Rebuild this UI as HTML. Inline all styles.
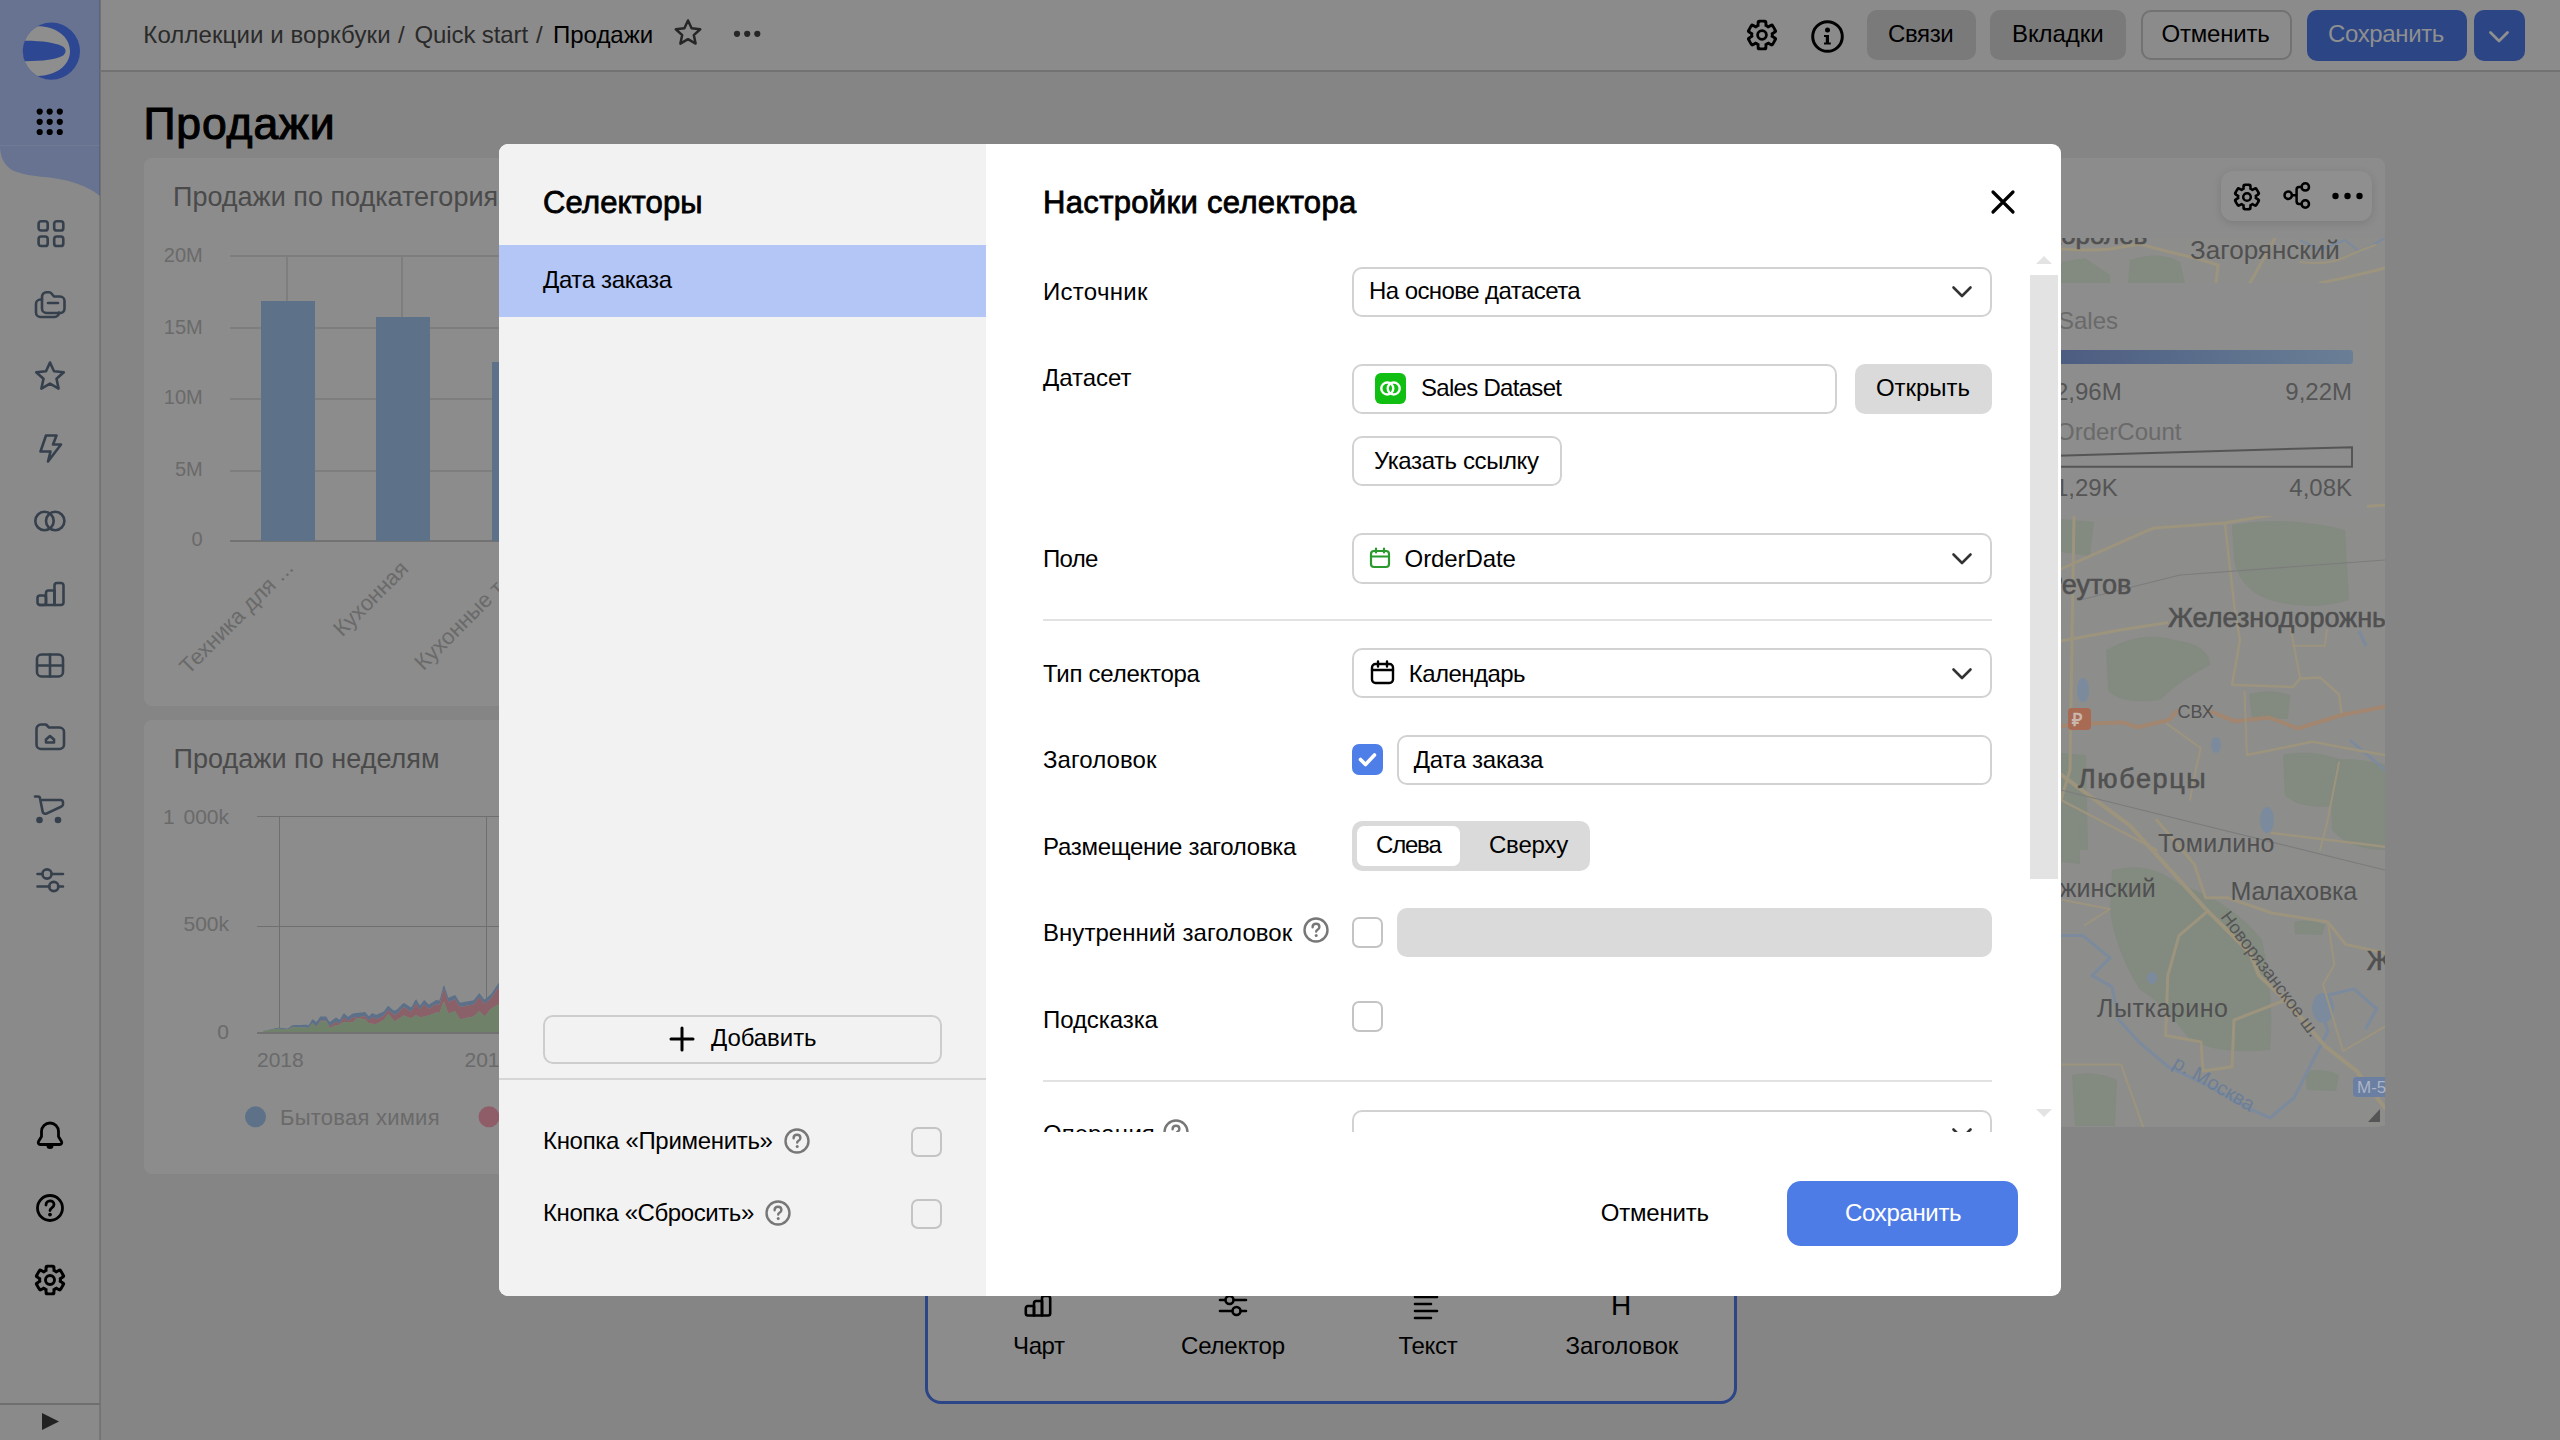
<!DOCTYPE html><html><head><meta charset="utf-8"><style>
*{box-sizing:border-box;margin:0;padding:0}
html,body{width:2560px;height:1440px;overflow:hidden}
body{position:relative;background:#858585;font-family:"Liberation Sans",sans-serif;color:#000}
.a{position:absolute}
.t{position:absolute;white-space:nowrap;line-height:1}
svg{position:absolute;overflow:visible}
</style></head><body>
<div class="a" style="left:0px;top:0px;width:100px;height:1440px;background:#8a8a8a"></div>
<svg style="left:0px;top:0px;" width="100" height="200" viewBox="0 0 100 200"><path d="M0 0H100V196C90 188 75 180 44 177C30 175.5 20 174 12 170C4 165 0 157 0 146Z" fill="#677390"/><path d="M0 145.5H100" stroke="#6f7a94" stroke-width="1"/></svg>
<div class="a" style="left:99px;top:0px;width:2px;height:1440px;background:rgba(0,0,0,0.13)"></div>
<svg style="left:21px;top:21px;" width="60" height="60" viewBox="0 0 60 60"><defs><clipPath id="lc"><circle cx="30.4" cy="30.1" r="28.6"/></clipPath></defs><circle cx="30.4" cy="30.1" r="28.6" fill="#2e4793"/><g clip-path="url(#lc)"><path d="M15 5.2C34 4.6 49 15 49 30.1C49 45 34 55.6 15 55L0 55L0 5.2Z" fill="#8e8e8e"/><path d="M0 19.8C20 19.5 35 21.5 42.5 26Q46.8 30 42.5 34.2C35 38.6 20 40.4 0 40.1Z" fill="#2e4793"/></g></svg>
<svg style="left:0px;top:0px;" width="100" height="150" viewBox="0 0 100 150"><circle cx="39.7" cy="111.6" r="3.1" fill="#000"/><circle cx="39.7" cy="121.8" r="3.1" fill="#000"/><circle cx="39.7" cy="132" r="3.1" fill="#000"/><circle cx="49.7" cy="111.6" r="3.1" fill="#000"/><circle cx="49.7" cy="121.8" r="3.1" fill="#000"/><circle cx="49.7" cy="132" r="3.1" fill="#000"/><circle cx="59.8" cy="111.6" r="3.1" fill="#000"/><circle cx="59.8" cy="121.8" r="3.1" fill="#000"/><circle cx="59.8" cy="132" r="3.1" fill="#000"/></svg>
<svg style="left:36px;top:218px;" width="32" height="32" viewBox="0 0 32 32"><g fill="none" stroke="#36404c" stroke-width="2.6" stroke-linecap="round" stroke-linejoin="round"><rect x="2.6" y="3.2" width="9.1" height="9.3" rx="2.6"/><rect x="18.2" y="3.2" width="9.1" height="9.3" rx="2.6"/><rect x="2.6" y="18.5" width="9.1" height="9.5" rx="2.6"/><rect x="18.2" y="18.5" width="9.1" height="9.5" rx="2.6"/></g></svg>
<svg style="left:34px;top:290px;" width="32" height="32" viewBox="0 0 32 32"><g fill="none" stroke="#36404c" stroke-width="2.6" stroke-linecap="round" stroke-linejoin="round"><path d="M8 9.5H6.5A4.5 4.5 0 0 0 2 14V22.5A4.5 4.5 0 0 0 6.5 27H20.5A4.5 4.5 0 0 0 25 22.5"/><path d="M8 7V18.5A4.5 4.5 0 0 0 12.5 23H26.5A4.5 4.5 0 0 0 30.5 18.5V11A4.5 4.5 0 0 0 26 6.5H20L17.5 3.5A3 3 0 0 0 15 2.3H12.5A4.5 4.5 0 0 0 8 7Z"/><path d="M14 13H24"/></g></svg>
<svg style="left:34px;top:360px;" width="32" height="32" viewBox="0 0 32 32"><path fill="none" stroke="#36404c" stroke-width="2.6" stroke-linecap="round" stroke-linejoin="round" d="M16 2.5L20 11.2L29.8 12.3L22.5 18.8L24.6 28.6L16 23.6L7.4 28.6L9.5 18.8L2.2 12.3L12 11.2Z"/></svg>
<svg style="left:35px;top:433px;" width="32" height="32" viewBox="0 0 32 32"><path fill="none" stroke="#36404c" stroke-width="2.6" stroke-linecap="round" stroke-linejoin="round" d="M11 2.5H21.5L18 11.5H26L13 28.5L15.5 18.5H5.5Z"/></svg>
<svg style="left:34px;top:505px;" width="32" height="32" viewBox="0 0 32 32"><g fill="none" stroke="#36404c" stroke-width="2.6" stroke-linecap="round" stroke-linejoin="round"><circle cx="10.5" cy="16" r="9.2"/><circle cx="21.2" cy="16" r="9.2"/></g></svg>
<svg style="left:35px;top:579px;" width="32" height="32" viewBox="0 0 32 32"><g fill="none" stroke="#36404c" stroke-width="2.6" stroke-linecap="round" stroke-linejoin="round"><rect x="2.5" y="16.5" width="8.5" height="9.5" rx="2.5"/><path d="M11 26V14A2.5 2.5 0 0 1 13.5 11.5H19.5V26"/><path d="M19.5 26V6.5A2.5 2.5 0 0 1 22 4H26A2.5 2.5 0 0 1 28.5 6.5V23.5A2.5 2.5 0 0 1 26 26H4.5"/></g></svg>
<svg style="left:34px;top:649px;" width="32" height="32" viewBox="0 0 32 32"><g fill="none" stroke="#36404c" stroke-width="2.6" stroke-linecap="round" stroke-linejoin="round"><rect x="3" y="5.5" width="26" height="22" rx="4.5"/><path d="M3 16.5H29M16 5.5V27.5"/></g></svg>
<svg style="left:34px;top:721px;" width="32" height="32" viewBox="0 0 32 32"><g fill="none" stroke="#36404c" stroke-width="2.6" stroke-linecap="round" stroke-linejoin="round"><path d="M2.5 8A4.5 4.5 0 0 1 7 3.5H12L15 6.5H25.5A4.5 4.5 0 0 1 30 11V23.5A4.5 4.5 0 0 1 25.5 28H7A4.5 4.5 0 0 1 2.5 23.5Z"/><path d="M12 21.5V18.5L16 15L20 18.5V21.5Z"/></g></svg>
<svg style="left:33px;top:794px;" width="32" height="32" viewBox="0 0 32 32"><g fill="none" stroke="#36404c" stroke-width="2.6" stroke-linecap="round" stroke-linejoin="round"><path d="M2 2.5H5A2 2 0 0 1 7 4.2L9.6 17.5A2.8 2.8 0 0 0 13.4 19.6L28.5 12.5A2.5 2.5 0 0 0 30 10.2V8.5A2.5 2.5 0 0 0 27.5 6H7.5"/></g><circle cx="6.5" cy="26" r="3.3" fill="#36404c"/><circle cx="25" cy="26" r="3.3" fill="#36404c"/></svg>
<svg style="left:34px;top:866px;" width="32" height="32" viewBox="0 0 32 32"><g fill="none" stroke="#36404c" stroke-width="2.6" stroke-linecap="round" stroke-linejoin="round"><path d="M3.5 8H8.5M17.5 8H29M3.5 20.5H15.5M24 20.5H29"/><circle cx="13" cy="8" r="4.6"/><circle cx="19.8" cy="20.5" r="4.6"/></g></svg>
<svg style="left:34px;top:1120px;" width="32" height="32" viewBox="0 0 32 32"><path fill="none" stroke="#000" stroke-width="2.8" stroke-linecap="round" stroke-linejoin="round" d="M16 3A8.5 8.5 0 0 0 7.5 11.5V16.5L4.5 21.5A2 2 0 0 0 6.2 24.5H25.8A2 2 0 0 0 27.5 21.5L24.5 16.5V11.5A8.5 8.5 0 0 0 16 3Z"/><path d="M12.5 25.5A3.5 3.5 0 0 0 19.5 25.5Z" fill="#000"/></svg>
<svg style="left:34px;top:1192px;" width="32" height="32" viewBox="0 0 32 32"><circle fill="none" stroke="#000" stroke-width="2.8" stroke-linecap="round" stroke-linejoin="round" cx="16" cy="16" r="12.5"/><path fill="none" stroke="#000" stroke-width="2.8" stroke-linecap="round" stroke-linejoin="round" d="M12 13C12 10.5 13.8 8.8 16 8.8S20 10.3 20 12.6C20 14.6 18.6 15.4 17.6 16.1C16.6 16.8 16 17.4 16 18.6"/><circle cx="16" cy="22.6" r="1.9" fill="#000"/></svg>
<svg style="left:34px;top:1264px;" width="32" height="32" viewBox="0 0 32 32"><defs><mask id="gm1"><rect x="-5" y="-5" width="42" height="42" fill="#fff"/><circle cx="16.0" cy="16.0" r="8.95" fill="#000"/><rect x="13.50" y="3.55" width="5.00" height="12.45" rx="1.2" fill="#000" transform="rotate(0 16.0 16.0)"/><rect x="13.50" y="3.55" width="5.00" height="12.45" rx="1.2" fill="#000" transform="rotate(60 16.0 16.0)"/><rect x="13.50" y="3.55" width="5.00" height="12.45" rx="1.2" fill="#000" transform="rotate(120 16.0 16.0)"/><rect x="13.50" y="3.55" width="5.00" height="12.45" rx="1.2" fill="#000" transform="rotate(180 16.0 16.0)"/><rect x="13.50" y="3.55" width="5.00" height="12.45" rx="1.2" fill="#000" transform="rotate(240 16.0 16.0)"/><rect x="13.50" y="3.55" width="5.00" height="12.45" rx="1.2" fill="#000" transform="rotate(300 16.0 16.0)"/></mask></defs><g mask="url(#gm1)"><circle cx="16.0" cy="16.0" r="11.85" fill="#000"/><rect x="10.60" y="0.65" width="10.80" height="15.35" rx="2.6" fill="#000" transform="rotate(0 16.0 16.0)"/><rect x="10.60" y="0.65" width="10.80" height="15.35" rx="2.6" fill="#000" transform="rotate(60 16.0 16.0)"/><rect x="10.60" y="0.65" width="10.80" height="15.35" rx="2.6" fill="#000" transform="rotate(120 16.0 16.0)"/><rect x="10.60" y="0.65" width="10.80" height="15.35" rx="2.6" fill="#000" transform="rotate(180 16.0 16.0)"/><rect x="10.60" y="0.65" width="10.80" height="15.35" rx="2.6" fill="#000" transform="rotate(240 16.0 16.0)"/><rect x="10.60" y="0.65" width="10.80" height="15.35" rx="2.6" fill="#000" transform="rotate(300 16.0 16.0)"/></g><circle cx="16.0" cy="16.0" r="4.5" fill="none" stroke="#000" stroke-width="2.9"/></svg>
<div class="a" style="left:0px;top:1403px;width:100px;height:2px;background:#6f6f6f"></div>
<svg style="left:40px;top:1412px;" width="20" height="20" viewBox="0 0 20 20"><path d="M2 1L19 9.5L2 18Z" fill="#222"/></svg>
<div class="a" style="left:101px;top:0px;width:2459px;height:71px;background:#8b8b8b"></div>
<div class="a" style="left:101px;top:70px;width:2459px;height:2px;background:#727272"></div>
<div class="t" style="left:143.3px;top:22.5px;font-size:24px;font-weight:400;color:#2a2a2a;;letter-spacing:0.103px">Коллекции и воркбуки</div>
<div class="t" style="left:398px;top:22.5px;font-size:24px;font-weight:400;color:#2a2a2a;">/</div>
<div class="t" style="left:414.5px;top:22.5px;font-size:24px;font-weight:400;color:#2a2a2a;;letter-spacing:-0.114px">Quick start</div>
<div class="t" style="left:536px;top:22.5px;font-size:24px;font-weight:400;color:#2a2a2a;">/</div>
<div class="t" style="left:553px;top:22.5px;font-size:24px;font-weight:400;color:#000;;letter-spacing:-0.012px">Продажи</div>
<svg style="left:672px;top:17px;" width="32" height="32" viewBox="0 0 32 32"><path d="M16 3.5L19.6 11.3L28.2 12.3L21.8 18.1L23.6 26.6L16 22.2L8.4 26.6L10.2 18.1L3.8 12.3L12.4 11.3Z" fill="none" stroke="#262626" stroke-width="2.5" stroke-linejoin="round"/></svg>
<svg style="left:730px;top:27px;" width="34" height="14" viewBox="0 0 34 14"><circle cx="7" cy="6.8" r="3.1" fill="#262626"/><circle cx="17.2" cy="6.8" r="3.1" fill="#262626"/><circle cx="27.3" cy="6.8" r="3.1" fill="#262626"/></svg>
<svg style="left:1745.6px;top:19.4px;" width="32" height="32" viewBox="0 0 32 32"><defs><mask id="gm2"><rect x="-5" y="-5" width="42" height="42" fill="#fff"/><circle cx="16.0" cy="16.0" r="8.90" fill="#000"/><rect x="13.50" y="3.50" width="5.00" height="12.50" rx="1.2" fill="#000" transform="rotate(0 16.0 16.0)"/><rect x="13.50" y="3.50" width="5.00" height="12.50" rx="1.2" fill="#000" transform="rotate(60 16.0 16.0)"/><rect x="13.50" y="3.50" width="5.00" height="12.50" rx="1.2" fill="#000" transform="rotate(120 16.0 16.0)"/><rect x="13.50" y="3.50" width="5.00" height="12.50" rx="1.2" fill="#000" transform="rotate(180 16.0 16.0)"/><rect x="13.50" y="3.50" width="5.00" height="12.50" rx="1.2" fill="#000" transform="rotate(240 16.0 16.0)"/><rect x="13.50" y="3.50" width="5.00" height="12.50" rx="1.2" fill="#000" transform="rotate(300 16.0 16.0)"/></mask></defs><g mask="url(#gm2)"><circle cx="16.0" cy="16.0" r="11.70" fill="#000"/><rect x="10.70" y="0.70" width="10.60" height="15.30" rx="2.6" fill="#000" transform="rotate(0 16.0 16.0)"/><rect x="10.70" y="0.70" width="10.60" height="15.30" rx="2.6" fill="#000" transform="rotate(60 16.0 16.0)"/><rect x="10.70" y="0.70" width="10.60" height="15.30" rx="2.6" fill="#000" transform="rotate(120 16.0 16.0)"/><rect x="10.70" y="0.70" width="10.60" height="15.30" rx="2.6" fill="#000" transform="rotate(180 16.0 16.0)"/><rect x="10.70" y="0.70" width="10.60" height="15.30" rx="2.6" fill="#000" transform="rotate(240 16.0 16.0)"/><rect x="10.70" y="0.70" width="10.60" height="15.30" rx="2.6" fill="#000" transform="rotate(300 16.0 16.0)"/></g><circle cx="16.0" cy="16.0" r="4.4" fill="none" stroke="#000" stroke-width="2.8"/></svg>
<svg style="left:1811px;top:19.5px;" width="33" height="33" viewBox="0 0 33 33"><circle cx="16.5" cy="16.5" r="14.8" fill="none" stroke="#000" stroke-width="3"/><circle cx="16.5" cy="10" r="2.5" fill="#000"/><path d="M13 15H18V22.5H19.8V24.5H13V22.5H14.8V17H13Z" fill="#000"/></svg>
<div class="a" style="left:1867px;top:10px;width:109px;height:50px;background:#7a7a7a;border-radius:10px"></div>
<div class="t" style="left:1888px;top:21.6px;font-size:24px;font-weight:400;color:#000;;letter-spacing:-0.365px">Связи</div>
<div class="a" style="left:1990px;top:10px;width:136px;height:50px;background:#7a7a7a;border-radius:10px"></div>
<div class="t" style="left:2012px;top:21.6px;font-size:24px;font-weight:400;color:#000;;letter-spacing:-0.081px">Вкладки</div>
<div class="a" style="left:2141px;top:10px;width:151px;height:50px;border:2px solid #727272;border-radius:10px"></div>
<div class="t" style="left:2161.5px;top:21.6px;font-size:24px;font-weight:400;color:#000;;letter-spacing:-0.187px">Отменить</div>
<div class="a" style="left:2307px;top:9.5px;width:160px;height:51px;background:#2b4585;border-radius:10px"></div>
<div class="t" style="left:2328px;top:21.6px;font-size:24px;font-weight:400;color:#8f8f8f;;letter-spacing:-0.363px">Сохранить</div>
<div class="a" style="left:2473.5px;top:9.5px;width:51.5px;height:51px;background:#2b4585;border-radius:10px"></div>
<svg style="left:2489px;top:30.5px;" width="20" height="12" viewBox="0 0 20 12"><path d="M1.5 1.5L10 10L18.5 1.5" fill="none" stroke="#8f8f8f" stroke-width="2.8" stroke-linecap="round" stroke-linejoin="round"/></svg>
<div class="t" style="left:143.5px;top:101.5px;font-size:44.5px;font-weight:400;color:#000;-webkit-text-stroke:1.1px #000;letter-spacing:0.870px">Продажи</div>
<div class="a" style="left:144px;top:158px;width:900px;height:548px;background:#8c8c8c;border-radius:8px"></div>
<div class="t" style="left:173px;top:183.5px;font-size:27px;font-weight:400;color:#4a4a4a;">Продажи по подкатегориям</div>
<div class="t" style="left:100px;width:102.7px;text-align:right;top:245.1px;font-size:20px;line-height:21px;color:#6a6a6a">20M</div>
<div class="t" style="left:100px;width:102.7px;text-align:right;top:316.8px;font-size:20px;line-height:21px;color:#6a6a6a">15M</div>
<div class="t" style="left:100px;width:102.7px;text-align:right;top:387.2px;font-size:20px;line-height:21px;color:#6a6a6a">10M</div>
<div class="t" style="left:100px;width:102.7px;text-align:right;top:458.9px;font-size:20px;line-height:21px;color:#6a6a6a">5M</div>
<div class="t" style="left:100px;width:102.7px;text-align:right;top:529.0px;font-size:20px;line-height:21px;color:#6a6a6a">0</div>
<div class="a" style="left:230px;top:255px;width:800px;height:2px;background:#7e7e7e"></div>
<div class="a" style="left:230px;top:327px;width:800px;height:2px;background:#7e7e7e"></div>
<div class="a" style="left:230px;top:398px;width:800px;height:2px;background:#7e7e7e"></div>
<div class="a" style="left:230px;top:470px;width:800px;height:2px;background:#7e7e7e"></div>
<div class="a" style="left:230px;top:540px;width:800px;height:2px;background:#727272"></div>
<div class="a" style="left:286px;top:256px;width:2px;height:45px;background:#7e7e7e"></div>
<div class="a" style="left:401px;top:256px;width:2px;height:61px;background:#7e7e7e"></div>
<div class="a" style="left:516px;top:256px;width:2px;height:106px;background:#7e7e7e"></div>
<div class="a" style="left:261px;top:301px;width:54px;height:240px;background:#5d7189"></div>
<div class="a" style="left:376px;top:317px;width:54px;height:224px;background:#5d7189"></div>
<div class="a" style="left:492px;top:362px;width:54px;height:179px;background:#5d7189"></div>
<div class="t" style="left:-105.0px;top:551.4px;width:400px;text-align:right;font-size:22px;color:#6a6a6a;transform-origin:400px 18.6px;transform:rotate(-45deg)">Техника для ...</div>
<div class="t" style="left:10.0px;top:552.4px;width:400px;text-align:right;font-size:22px;color:#6a6a6a;transform-origin:400px 18.6px;transform:rotate(-45deg)">Кухонная</div>
<div class="t" style="left:127.0px;top:550.4px;width:400px;text-align:right;font-size:22px;color:#6a6a6a;transform-origin:400px 18.6px;transform:rotate(-45deg)">Кухонные то...</div>
<div class="a" style="left:144px;top:720px;width:900px;height:454px;background:#8c8c8c;border-radius:8px"></div>
<div class="t" style="left:173.6px;top:745.8px;font-size:27px;font-weight:400;color:#4a4a4a;;letter-spacing:0.025px">Продажи по неделям</div>
<div class="t" style="left:100px;width:129px;text-align:right;top:805.8px;font-size:21px;line-height:21px;color:#6a6a6a;word-spacing:3px">1 000k</div>
<div class="t" style="left:100px;width:129px;text-align:right;top:913.4px;font-size:21px;line-height:21px;color:#6a6a6a;word-spacing:3px">500k</div>
<div class="t" style="left:100px;width:129px;text-align:right;top:1021.0px;font-size:21px;line-height:21px;color:#6a6a6a;word-spacing:3px">0</div>
<div class="a" style="left:257px;top:816px;width:800px;height:1px;background:#6f6f6f"></div>
<div class="a" style="left:257px;top:926px;width:800px;height:1px;background:#6f6f6f"></div>
<div class="a" style="left:279px;top:817px;width:1px;height:215px;background:#6f6f6f"></div>
<div class="a" style="left:486px;top:817px;width:1px;height:215px;background:#6f6f6f"></div>
<div class="a" style="left:257px;top:1032px;width:800px;height:2px;background:#727272"></div>
<div class="t" style="left:257px;top:1048.7px;font-size:21px;line-height:21px;color:#6a6a6a">2018</div>
<div class="t" style="left:464.5px;top:1048.7px;font-size:21px;line-height:21px;color:#6a6a6a">2019</div>
<div class="a" style="left:0;top:0;width:499px;height:1100px;overflow:hidden"><svg style="left:0px;top:0px;" width="600" height="1100" viewBox="0 0 600 1100"><path d="M263.2 1032 L263.2 1031.1 L264.2 1030.8 L265.2 1030.6 L266.2 1030.4 L267.2 1030.1 L268.2 1029.9 L269.2 1029.7 L270.2 1029.5 L271.2 1029.2 L272.2 1029.0 L273.2 1028.8 L274.2 1028.6 L275.2 1028.3 L276.2 1028.1 L277.2 1027.9 L278.2 1027.7 L279.2 1027.7 L280.2 1027.8 L281.2 1027.9 L282.2 1028.0 L283.2 1028.1 L284.2 1028.2 L285.2 1028.3 L286.2 1028.4 L287.2 1028.5 L288.2 1028.5 L289.2 1027.6 L290.2 1026.8 L291.2 1025.9 L292.2 1025.2 L293.2 1025.2 L294.2 1025.1 L295.2 1025.1 L296.2 1025.1 L297.2 1025.0 L298.2 1025.0 L299.2 1025.0 L300.2 1024.9 L301.2 1024.9 L302.2 1024.9 L303.2 1024.8 L304.2 1024.8 L305.2 1024.8 L306.2 1024.7 L307.2 1025.0 L308.2 1025.5 L309.2 1024.6 L310.2 1022.9 L311.2 1021.1 L312.2 1019.4 L313.2 1019.5 L314.2 1020.3 L315.2 1021.2 L316.2 1022.1 L317.2 1021.1 L318.2 1019.6 L319.2 1018.1 L320.2 1016.6 L321.2 1016.4 L322.2 1016.4 L323.2 1016.4 L324.2 1016.4 L325.2 1016.4 L326.2 1016.5 L327.2 1018.2 L328.2 1019.9 L329.2 1021.6 L330.2 1021.8 L331.2 1021.0 L332.2 1020.3 L333.2 1019.5 L334.2 1018.7 L335.2 1018.0 L336.2 1017.5 L337.2 1018.2 L338.2 1018.8 L339.2 1019.4 L340.2 1019.2 L341.2 1017.5 L342.2 1015.7 L343.2 1014.0 L344.2 1013.4 L345.2 1014.3 L346.2 1015.2 L347.2 1016.1 L348.2 1016.9 L349.2 1016.1 L350.2 1015.3 L351.2 1014.5 L352.2 1013.7 L353.2 1013.4 L354.2 1013.3 L355.2 1013.2 L356.2 1013.1 L357.2 1012.9 L358.2 1012.8 L359.2 1012.7 L360.2 1012.6 L361.2 1012.5 L362.2 1012.4 L363.2 1012.2 L364.2 1012.1 L365.2 1012.0 L366.2 1013.3 L367.2 1014.5 L368.2 1015.8 L369.2 1015.9 L370.2 1014.9 L371.2 1013.9 L372.2 1013.1 L373.2 1013.6 L374.2 1014.1 L375.2 1014.6 L376.2 1014.8 L377.2 1014.4 L378.2 1014.0 L379.2 1013.5 L380.2 1013.1 L381.2 1012.7 L382.2 1012.2 L383.2 1011.8 L384.2 1011.0 L385.2 1009.6 L386.2 1008.3 L387.2 1007.0 L388.2 1005.7 L389.2 1006.6 L390.2 1007.5 L391.2 1008.4 L392.2 1009.3 L393.2 1010.2 L394.2 1010.4 L395.2 1010.3 L396.2 1010.1 L397.2 1009.3 L398.2 1008.3 L399.2 1007.3 L400.2 1006.3 L401.2 1005.3 L402.2 1004.3 L403.2 1003.3 L404.2 1003.0 L405.2 1003.7 L406.2 1004.3 L407.2 1005.0 L408.2 1005.7 L409.2 1006.3 L410.2 1007.0 L411.2 1007.5 L412.2 1005.7 L413.2 1003.9 L414.2 1002.1 L415.2 1000.3 L416.2 999.2 L417.2 1000.9 L418.2 1002.7 L419.2 1004.4 L420.2 1005.3 L421.2 1004.0 L422.2 1002.6 L423.2 1001.3 L424.2 1000.0 L425.2 1000.8 L426.2 1001.9 L427.2 1003.0 L428.2 1004.1 L429.2 1004.4 L430.2 1003.8 L431.2 1003.1 L432.2 1002.5 L433.2 1001.9 L434.2 1001.3 L435.2 1000.6 L436.2 1000.0 L437.2 1000.0 L438.2 1000.4 L439.2 1000.7 L440.2 998.0 L441.2 994.2 L442.2 990.4 L443.2 986.6 L444.2 985.3 L445.2 988.4 L446.2 991.5 L447.2 994.6 L448.2 997.7 L449.2 997.4 L450.2 997.0 L451.2 996.6 L452.2 996.2 L453.2 995.7 L454.2 995.3 L455.2 995.1 L456.2 996.7 L457.2 998.3 L458.2 999.9 L459.2 1001.5 L460.2 1002.7 L461.2 1002.5 L462.2 1002.3 L463.2 1002.2 L464.2 1002.0 L465.2 1001.8 L466.2 1001.6 L467.2 1001.4 L468.2 1001.3 L469.2 1001.1 L470.2 1000.9 L471.2 1000.7 L472.2 1000.5 L473.2 1000.4 L474.2 999.6 L475.2 998.3 L476.2 997.1 L477.2 995.8 L478.2 994.6 L479.2 993.3 L480.2 994.0 L481.2 995.4 L482.2 996.8 L483.2 998.2 L484.2 999.6 L485.2 999.1 L486.2 998.2 L487.2 997.4 L488.2 996.5 L489.2 995.7 L490.2 994.8 L491.2 994.0 L492.2 992.5 L493.2 991.0 L494.2 989.6 L495.2 988.1 L496.2 986.6 L497.2 985.2 L498.2 983.7 L499.2 982.7 L500.2 982.0 L500.2 986.2 L499.2 986.9 L498.2 987.9 L497.2 989.4 L496.2 990.8 L495.2 992.3 L494.2 993.8 L493.2 995.2 L492.2 996.7 L491.2 998.2 L490.2 999.0 L489.2 999.9 L488.2 1000.7 L487.2 1001.6 L486.2 1002.4 L485.2 1003.3 L484.2 1003.8 L483.2 1002.4 L482.2 1001.0 L481.2 999.6 L480.2 998.2 L479.2 997.5 L478.2 998.8 L477.2 1000.0 L476.2 1001.3 L475.2 1002.5 L474.2 1003.8 L473.2 1004.6 L472.2 1004.7 L471.2 1004.9 L470.2 1005.1 L469.2 1005.3 L468.2 1005.5 L467.2 1005.6 L466.2 1005.8 L465.2 1006.0 L464.2 1006.2 L463.2 1006.4 L462.2 1006.5 L461.2 1006.7 L460.2 1006.9 L459.2 1005.7 L458.2 1004.1 L457.2 1002.5 L456.2 1000.9 L455.2 999.3 L454.2 999.5 L453.2 999.9 L452.2 1000.4 L451.2 1000.8 L450.2 1001.2 L449.2 1001.6 L448.2 1001.9 L447.2 998.8 L446.2 995.7 L445.2 992.6 L444.2 989.5 L443.2 990.8 L442.2 994.6 L441.2 998.4 L440.2 1002.2 L439.2 1004.9 L438.2 1004.6 L437.2 1004.2 L436.2 1004.2 L435.2 1004.8 L434.2 1005.5 L433.2 1006.1 L432.2 1006.7 L431.2 1007.3 L430.2 1008.0 L429.2 1008.6 L428.2 1008.3 L427.2 1007.2 L426.2 1006.1 L425.2 1005.0 L424.2 1004.2 L423.2 1005.5 L422.2 1006.8 L421.2 1008.2 L420.2 1009.5 L419.2 1008.6 L418.2 1006.9 L417.2 1005.1 L416.2 1003.4 L415.2 1004.5 L414.2 1006.3 L413.2 1008.1 L412.2 1009.9 L411.2 1011.7 L410.2 1011.2 L409.2 1010.5 L408.2 1009.9 L407.2 1009.2 L406.2 1008.5 L405.2 1007.9 L404.2 1007.2 L403.2 1007.5 L402.2 1008.5 L401.2 1009.5 L400.2 1010.5 L399.2 1011.5 L398.2 1012.5 L397.2 1013.5 L396.2 1014.3 L395.2 1014.5 L394.2 1014.6 L393.2 1014.4 L392.2 1013.5 L391.2 1012.6 L390.2 1011.7 L389.2 1010.8 L388.2 1009.9 L387.2 1011.2 L386.2 1012.5 L385.2 1013.8 L384.2 1015.2 L383.2 1016.0 L382.2 1016.4 L381.2 1016.9 L380.2 1017.3 L379.2 1017.7 L378.2 1018.2 L377.2 1018.6 L376.2 1019.0 L375.2 1018.8 L374.2 1018.3 L373.2 1017.8 L372.2 1017.3 L371.2 1018.1 L370.2 1019.1 L369.2 1020.1 L368.2 1020.0 L367.2 1018.7 L366.2 1017.5 L365.2 1016.2 L364.2 1016.3 L363.2 1016.4 L362.2 1016.6 L361.2 1016.7 L360.2 1016.8 L359.2 1016.9 L358.2 1017.0 L357.2 1017.1 L356.2 1017.3 L355.2 1017.4 L354.2 1017.5 L353.2 1017.6 L352.2 1017.9 L351.2 1018.7 L350.2 1019.5 L349.2 1020.3 L348.2 1021.1 L347.2 1020.3 L346.2 1019.4 L345.2 1018.5 L344.2 1017.6 L343.2 1018.2 L342.2 1019.9 L341.2 1021.7 L340.2 1023.4 L339.2 1023.6 L338.2 1023.0 L337.2 1022.4 L336.2 1021.7 L335.2 1022.2 L334.2 1022.9 L333.2 1023.7 L332.2 1024.5 L331.2 1025.2 L330.2 1026.0 L329.2 1025.8 L328.2 1024.1 L327.2 1022.4 L326.2 1020.7 L325.2 1020.6 L324.2 1020.6 L323.2 1020.6 L322.2 1020.6 L321.2 1020.6 L320.2 1020.8 L319.2 1022.3 L318.2 1023.8 L317.2 1025.3 L316.2 1026.3 L315.2 1025.4 L314.2 1024.5 L313.2 1023.5 L312.2 1023.2 L311.2 1024.5 L310.2 1025.9 L309.2 1027.3 L308.2 1028.0 L307.2 1027.8 L306.2 1027.6 L305.2 1027.6 L304.2 1027.6 L303.2 1027.5 L302.2 1027.5 L301.2 1027.5 L300.2 1027.4 L299.2 1027.4 L298.2 1027.4 L297.2 1027.3 L296.2 1027.3 L295.2 1027.3 L294.2 1027.2 L293.2 1027.2 L292.2 1027.2 L291.2 1027.6 L290.2 1028.3 L289.2 1028.9 L288.2 1029.5 L287.2 1029.5 L286.2 1029.4 L285.2 1029.3 L284.2 1029.2 L283.2 1029.1 L282.2 1029.0 L281.2 1028.9 L280.2 1028.8 L279.2 1028.7 L278.2 1028.6 L277.2 1028.8 L276.2 1029.0 L275.2 1029.1 L274.2 1029.3 L273.2 1029.4 L272.2 1029.6 L271.2 1029.8 L270.2 1029.9 L269.2 1030.1 L268.2 1030.2 L267.2 1030.4 L266.2 1030.6 L265.2 1030.7 L264.2 1030.9 L263.2 1031.1 Z" fill="#5c7189"/><path d="M263.2 1032 L263.2 1031.1 L264.2 1030.9 L265.2 1030.7 L266.2 1030.6 L267.2 1030.4 L268.2 1030.2 L269.2 1030.1 L270.2 1029.9 L271.2 1029.8 L272.2 1029.6 L273.2 1029.4 L274.2 1029.3 L275.2 1029.1 L276.2 1029.0 L277.2 1028.8 L278.2 1028.6 L279.2 1028.7 L280.2 1028.8 L281.2 1028.9 L282.2 1029.0 L283.2 1029.1 L284.2 1029.2 L285.2 1029.3 L286.2 1029.4 L287.2 1029.5 L288.2 1029.5 L289.2 1028.9 L290.2 1028.3 L291.2 1027.6 L292.2 1027.2 L293.2 1027.2 L294.2 1027.2 L295.2 1027.3 L296.2 1027.3 L297.2 1027.3 L298.2 1027.4 L299.2 1027.4 L300.2 1027.4 L301.2 1027.5 L302.2 1027.5 L303.2 1027.5 L304.2 1027.6 L305.2 1027.6 L306.2 1027.6 L307.2 1027.8 L308.2 1028.0 L309.2 1027.3 L310.2 1025.9 L311.2 1024.5 L312.2 1023.2 L313.2 1023.5 L314.2 1024.5 L315.2 1025.4 L316.2 1026.3 L317.2 1025.3 L318.2 1023.8 L319.2 1022.3 L320.2 1020.8 L321.2 1020.6 L322.2 1020.6 L323.2 1020.6 L324.2 1020.6 L325.2 1020.6 L326.2 1020.7 L327.2 1022.4 L328.2 1024.1 L329.2 1025.8 L330.2 1026.0 L331.2 1025.2 L332.2 1024.5 L333.2 1023.7 L334.2 1022.9 L335.2 1022.2 L336.2 1021.7 L337.2 1022.4 L338.2 1023.0 L339.2 1023.6 L340.2 1023.4 L341.2 1021.7 L342.2 1019.9 L343.2 1018.2 L344.2 1017.6 L345.2 1018.5 L346.2 1019.4 L347.2 1020.3 L348.2 1021.1 L349.2 1020.3 L350.2 1019.5 L351.2 1018.7 L352.2 1017.9 L353.2 1017.6 L354.2 1017.5 L355.2 1017.4 L356.2 1017.3 L357.2 1017.1 L358.2 1017.0 L359.2 1016.9 L360.2 1016.8 L361.2 1016.7 L362.2 1016.6 L363.2 1016.4 L364.2 1016.3 L365.2 1016.2 L366.2 1017.5 L367.2 1018.7 L368.2 1020.0 L369.2 1020.1 L370.2 1019.1 L371.2 1018.1 L372.2 1017.3 L373.2 1017.8 L374.2 1018.3 L375.2 1018.8 L376.2 1019.0 L377.2 1018.6 L378.2 1018.2 L379.2 1017.7 L380.2 1017.3 L381.2 1016.9 L382.2 1016.4 L383.2 1016.0 L384.2 1015.2 L385.2 1013.8 L386.2 1012.5 L387.2 1011.2 L388.2 1009.9 L389.2 1010.8 L390.2 1011.7 L391.2 1012.6 L392.2 1013.5 L393.2 1014.4 L394.2 1014.6 L395.2 1014.5 L396.2 1014.3 L397.2 1013.5 L398.2 1012.5 L399.2 1011.5 L400.2 1010.5 L401.2 1009.5 L402.2 1008.5 L403.2 1007.5 L404.2 1007.2 L405.2 1007.9 L406.2 1008.5 L407.2 1009.2 L408.2 1009.9 L409.2 1010.5 L410.2 1011.2 L411.2 1011.7 L412.2 1009.9 L413.2 1008.1 L414.2 1006.3 L415.2 1004.5 L416.2 1003.4 L417.2 1005.1 L418.2 1006.9 L419.2 1008.6 L420.2 1009.5 L421.2 1008.2 L422.2 1006.8 L423.2 1005.5 L424.2 1004.2 L425.2 1005.0 L426.2 1006.1 L427.2 1007.2 L428.2 1008.3 L429.2 1008.6 L430.2 1008.0 L431.2 1007.3 L432.2 1006.7 L433.2 1006.1 L434.2 1005.5 L435.2 1004.8 L436.2 1004.2 L437.2 1004.2 L438.2 1004.6 L439.2 1004.9 L440.2 1002.2 L441.2 998.4 L442.2 994.6 L443.2 990.8 L444.2 989.5 L445.2 992.6 L446.2 995.7 L447.2 998.8 L448.2 1001.9 L449.2 1001.6 L450.2 1001.2 L451.2 1000.8 L452.2 1000.4 L453.2 999.9 L454.2 999.5 L455.2 999.3 L456.2 1000.9 L457.2 1002.5 L458.2 1004.1 L459.2 1005.7 L460.2 1006.9 L461.2 1006.7 L462.2 1006.5 L463.2 1006.4 L464.2 1006.2 L465.2 1006.0 L466.2 1005.8 L467.2 1005.6 L468.2 1005.5 L469.2 1005.3 L470.2 1005.1 L471.2 1004.9 L472.2 1004.7 L473.2 1004.6 L474.2 1003.8 L475.2 1002.5 L476.2 1001.3 L477.2 1000.0 L478.2 998.8 L479.2 997.5 L480.2 998.2 L481.2 999.6 L482.2 1001.0 L483.2 1002.4 L484.2 1003.8 L485.2 1003.3 L486.2 1002.4 L487.2 1001.6 L488.2 1000.7 L489.2 999.9 L490.2 999.0 L491.2 998.2 L492.2 996.7 L493.2 995.2 L494.2 993.8 L495.2 992.3 L496.2 990.8 L497.2 989.4 L498.2 987.9 L499.2 986.9 L500.2 986.2 L500.2 1003.1 L499.2 1003.8 L498.2 1004.4 L497.2 1005.0 L496.2 1005.6 L495.2 1006.2 L494.2 1006.8 L493.2 1007.4 L492.2 1008.0 L491.2 1008.6 L490.2 1009.7 L489.2 1010.9 L488.2 1012.0 L487.2 1013.2 L486.2 1014.3 L485.2 1015.5 L484.2 1016.2 L483.2 1015.1 L482.2 1014.0 L481.2 1012.9 L480.2 1011.8 L479.2 1011.3 L478.2 1012.2 L477.2 1013.1 L476.2 1014.1 L475.2 1015.0 L474.2 1015.9 L473.2 1016.5 L472.2 1016.7 L471.2 1016.9 L470.2 1017.1 L469.2 1017.4 L468.2 1017.6 L467.2 1017.8 L466.2 1018.0 L465.2 1018.2 L464.2 1018.4 L463.2 1018.6 L462.2 1018.9 L461.2 1019.1 L460.2 1019.3 L459.2 1018.0 L458.2 1016.3 L457.2 1014.6 L456.2 1012.9 L455.2 1011.2 L454.2 1011.3 L453.2 1011.7 L452.2 1012.1 L451.2 1012.4 L450.2 1012.8 L449.2 1013.1 L448.2 1013.4 L447.2 1010.5 L446.2 1007.6 L445.2 1004.7 L444.2 1001.8 L443.2 1002.6 L442.2 1005.4 L441.2 1008.1 L440.2 1010.9 L439.2 1012.9 L438.2 1012.8 L437.2 1012.6 L436.2 1012.6 L435.2 1013.0 L434.2 1013.4 L433.2 1013.7 L432.2 1014.1 L431.2 1014.5 L430.2 1014.9 L429.2 1015.2 L428.2 1015.5 L427.2 1015.8 L426.2 1016.0 L425.2 1016.2 L424.2 1016.4 L423.2 1016.7 L422.2 1016.9 L421.2 1017.1 L420.2 1017.3 L419.2 1016.9 L418.2 1016.3 L417.2 1015.7 L416.2 1015.1 L415.2 1015.5 L414.2 1016.2 L413.2 1016.9 L412.2 1017.6 L411.2 1018.3 L410.2 1018.0 L409.2 1017.6 L408.2 1017.2 L407.2 1016.8 L406.2 1016.4 L405.2 1016.0 L404.2 1015.6 L403.2 1015.8 L402.2 1016.4 L401.2 1017.1 L400.2 1017.7 L399.2 1018.3 L398.2 1019.0 L397.2 1019.6 L396.2 1020.2 L395.2 1020.9 L394.2 1020.9 L393.2 1019.8 L392.2 1018.6 L391.2 1017.4 L390.2 1016.3 L389.2 1015.1 L388.2 1014.0 L387.2 1015.3 L386.2 1016.6 L385.2 1017.9 L384.2 1019.3 L383.2 1020.2 L382.2 1020.7 L381.2 1021.3 L380.2 1021.8 L379.2 1022.4 L378.2 1023.0 L377.2 1023.5 L376.2 1024.1 L375.2 1024.1 L374.2 1024.0 L373.2 1023.8 L372.2 1023.7 L371.2 1023.6 L370.2 1023.4 L369.2 1023.3 L368.2 1022.7 L367.2 1021.6 L366.2 1020.4 L365.2 1019.3 L364.2 1019.1 L363.2 1019.0 L362.2 1018.8 L361.2 1018.6 L360.2 1018.4 L359.2 1018.2 L358.2 1018.0 L357.2 1018.1 L356.2 1019.0 L355.2 1019.9 L354.2 1020.8 L353.2 1021.7 L352.2 1022.2 L351.2 1022.2 L350.2 1022.1 L349.2 1022.1 L348.2 1022.0 L347.2 1022.0 L346.2 1021.9 L345.2 1021.9 L344.2 1021.8 L343.2 1022.2 L342.2 1022.9 L341.2 1023.7 L340.2 1024.4 L339.2 1024.8 L338.2 1024.9 L337.2 1025.0 L336.2 1025.2 L335.2 1025.5 L334.2 1026.0 L333.2 1026.5 L332.2 1026.9 L331.2 1027.4 L330.2 1027.8 L329.2 1027.3 L328.2 1025.3 L327.2 1023.3 L326.2 1021.3 L325.2 1021.3 L324.2 1021.3 L323.2 1021.3 L322.2 1021.3 L321.2 1021.3 L320.2 1021.5 L319.2 1023.0 L318.2 1024.5 L317.2 1026.0 L316.2 1026.9 L315.2 1025.8 L314.2 1024.7 L313.2 1023.5 L312.2 1023.2 L311.2 1024.5 L310.2 1025.9 L309.2 1027.3 L308.2 1028.0 L307.2 1027.8 L306.2 1027.6 L305.2 1027.6 L304.2 1027.6 L303.2 1027.5 L302.2 1027.5 L301.2 1027.5 L300.2 1027.4 L299.2 1027.4 L298.2 1027.4 L297.2 1027.3 L296.2 1027.3 L295.2 1027.3 L294.2 1027.2 L293.2 1027.2 L292.2 1027.2 L291.2 1027.6 L290.2 1028.3 L289.2 1028.9 L288.2 1029.5 L287.2 1029.5 L286.2 1029.4 L285.2 1029.3 L284.2 1029.2 L283.2 1029.1 L282.2 1029.0 L281.2 1028.9 L280.2 1028.8 L279.2 1028.7 L278.2 1028.6 L277.2 1028.8 L276.2 1029.0 L275.2 1029.1 L274.2 1029.3 L273.2 1029.4 L272.2 1029.6 L271.2 1029.8 L270.2 1029.9 L269.2 1030.1 L268.2 1030.2 L267.2 1030.4 L266.2 1030.6 L265.2 1030.7 L264.2 1030.9 L263.2 1031.1 Z" fill="#8a6069"/><path d="M263.2 1032 L263.2 1031.1 L264.2 1030.9 L265.2 1030.7 L266.2 1030.6 L267.2 1030.4 L268.2 1030.2 L269.2 1030.1 L270.2 1029.9 L271.2 1029.8 L272.2 1029.6 L273.2 1029.4 L274.2 1029.3 L275.2 1029.1 L276.2 1029.0 L277.2 1028.8 L278.2 1028.6 L279.2 1028.7 L280.2 1028.8 L281.2 1028.9 L282.2 1029.0 L283.2 1029.1 L284.2 1029.2 L285.2 1029.3 L286.2 1029.4 L287.2 1029.5 L288.2 1029.5 L289.2 1028.9 L290.2 1028.3 L291.2 1027.6 L292.2 1027.2 L293.2 1027.2 L294.2 1027.2 L295.2 1027.3 L296.2 1027.3 L297.2 1027.3 L298.2 1027.4 L299.2 1027.4 L300.2 1027.4 L301.2 1027.5 L302.2 1027.5 L303.2 1027.5 L304.2 1027.6 L305.2 1027.6 L306.2 1027.6 L307.2 1027.8 L308.2 1028.0 L309.2 1027.3 L310.2 1025.9 L311.2 1024.5 L312.2 1023.2 L313.2 1023.5 L314.2 1024.7 L315.2 1025.8 L316.2 1026.9 L317.2 1026.0 L318.2 1024.5 L319.2 1023.0 L320.2 1021.5 L321.2 1021.3 L322.2 1021.3 L323.2 1021.3 L324.2 1021.3 L325.2 1021.3 L326.2 1021.3 L327.2 1023.3 L328.2 1025.3 L329.2 1027.3 L330.2 1027.8 L331.2 1027.4 L332.2 1026.9 L333.2 1026.5 L334.2 1026.0 L335.2 1025.5 L336.2 1025.2 L337.2 1025.0 L338.2 1024.9 L339.2 1024.8 L340.2 1024.4 L341.2 1023.7 L342.2 1022.9 L343.2 1022.2 L344.2 1021.8 L345.2 1021.9 L346.2 1021.9 L347.2 1022.0 L348.2 1022.0 L349.2 1022.1 L350.2 1022.1 L351.2 1022.2 L352.2 1022.2 L353.2 1021.7 L354.2 1020.8 L355.2 1019.9 L356.2 1019.0 L357.2 1018.1 L358.2 1018.0 L359.2 1018.2 L360.2 1018.4 L361.2 1018.6 L362.2 1018.8 L363.2 1019.0 L364.2 1019.1 L365.2 1019.3 L366.2 1020.4 L367.2 1021.6 L368.2 1022.7 L369.2 1023.3 L370.2 1023.4 L371.2 1023.6 L372.2 1023.7 L373.2 1023.8 L374.2 1024.0 L375.2 1024.1 L376.2 1024.1 L377.2 1023.5 L378.2 1023.0 L379.2 1022.4 L380.2 1021.8 L381.2 1021.3 L382.2 1020.7 L383.2 1020.2 L384.2 1019.3 L385.2 1017.9 L386.2 1016.6 L387.2 1015.3 L388.2 1014.0 L389.2 1015.1 L390.2 1016.3 L391.2 1017.4 L392.2 1018.6 L393.2 1019.8 L394.2 1020.9 L395.2 1020.9 L396.2 1020.2 L397.2 1019.6 L398.2 1019.0 L399.2 1018.3 L400.2 1017.7 L401.2 1017.1 L402.2 1016.4 L403.2 1015.8 L404.2 1015.6 L405.2 1016.0 L406.2 1016.4 L407.2 1016.8 L408.2 1017.2 L409.2 1017.6 L410.2 1018.0 L411.2 1018.3 L412.2 1017.6 L413.2 1016.9 L414.2 1016.2 L415.2 1015.5 L416.2 1015.1 L417.2 1015.7 L418.2 1016.3 L419.2 1016.9 L420.2 1017.3 L421.2 1017.1 L422.2 1016.9 L423.2 1016.7 L424.2 1016.4 L425.2 1016.2 L426.2 1016.0 L427.2 1015.8 L428.2 1015.5 L429.2 1015.2 L430.2 1014.9 L431.2 1014.5 L432.2 1014.1 L433.2 1013.7 L434.2 1013.4 L435.2 1013.0 L436.2 1012.6 L437.2 1012.6 L438.2 1012.8 L439.2 1012.9 L440.2 1010.9 L441.2 1008.1 L442.2 1005.4 L443.2 1002.6 L444.2 1001.8 L445.2 1004.7 L446.2 1007.6 L447.2 1010.5 L448.2 1013.4 L449.2 1013.1 L450.2 1012.8 L451.2 1012.4 L452.2 1012.1 L453.2 1011.7 L454.2 1011.3 L455.2 1011.2 L456.2 1012.9 L457.2 1014.6 L458.2 1016.3 L459.2 1018.0 L460.2 1019.3 L461.2 1019.1 L462.2 1018.9 L463.2 1018.6 L464.2 1018.4 L465.2 1018.2 L466.2 1018.0 L467.2 1017.8 L468.2 1017.6 L469.2 1017.4 L470.2 1017.1 L471.2 1016.9 L472.2 1016.7 L473.2 1016.5 L474.2 1015.9 L475.2 1015.0 L476.2 1014.1 L477.2 1013.1 L478.2 1012.2 L479.2 1011.3 L480.2 1011.8 L481.2 1012.9 L482.2 1014.0 L483.2 1015.1 L484.2 1016.2 L485.2 1015.5 L486.2 1014.3 L487.2 1013.2 L488.2 1012.0 L489.2 1010.9 L490.2 1009.7 L491.2 1008.6 L492.2 1008.0 L493.2 1007.4 L494.2 1006.8 L495.2 1006.2 L496.2 1005.6 L497.2 1005.0 L498.2 1004.4 L499.2 1003.8 L500.2 1003.1 L500.2 1032.0 L499.2 1032.0 L498.2 1032.0 L497.2 1032.0 L496.2 1032.0 L495.2 1032.0 L494.2 1032.0 L493.2 1032.0 L492.2 1032.0 L491.2 1032.0 L490.2 1032.0 L489.2 1032.0 L488.2 1032.0 L487.2 1032.0 L486.2 1032.0 L485.2 1032.0 L484.2 1032.0 L483.2 1032.0 L482.2 1032.0 L481.2 1032.0 L480.2 1032.0 L479.2 1032.0 L478.2 1032.0 L477.2 1032.0 L476.2 1032.0 L475.2 1032.0 L474.2 1032.0 L473.2 1032.0 L472.2 1032.0 L471.2 1032.0 L470.2 1032.0 L469.2 1032.0 L468.2 1032.0 L467.2 1032.0 L466.2 1032.0 L465.2 1032.0 L464.2 1032.0 L463.2 1032.0 L462.2 1032.0 L461.2 1032.0 L460.2 1032.0 L459.2 1032.0 L458.2 1032.0 L457.2 1032.0 L456.2 1032.0 L455.2 1032.0 L454.2 1032.0 L453.2 1032.0 L452.2 1032.0 L451.2 1032.0 L450.2 1032.0 L449.2 1032.0 L448.2 1032.0 L447.2 1032.0 L446.2 1032.0 L445.2 1032.0 L444.2 1032.0 L443.2 1032.0 L442.2 1032.0 L441.2 1032.0 L440.2 1032.0 L439.2 1032.0 L438.2 1032.0 L437.2 1032.0 L436.2 1032.0 L435.2 1032.0 L434.2 1032.0 L433.2 1032.0 L432.2 1032.0 L431.2 1032.0 L430.2 1032.0 L429.2 1032.0 L428.2 1032.0 L427.2 1032.0 L426.2 1032.0 L425.2 1032.0 L424.2 1032.0 L423.2 1032.0 L422.2 1032.0 L421.2 1032.0 L420.2 1032.0 L419.2 1032.0 L418.2 1032.0 L417.2 1032.0 L416.2 1032.0 L415.2 1032.0 L414.2 1032.0 L413.2 1032.0 L412.2 1032.0 L411.2 1032.0 L410.2 1032.0 L409.2 1032.0 L408.2 1032.0 L407.2 1032.0 L406.2 1032.0 L405.2 1032.0 L404.2 1032.0 L403.2 1032.0 L402.2 1032.0 L401.2 1032.0 L400.2 1032.0 L399.2 1032.0 L398.2 1032.0 L397.2 1032.0 L396.2 1032.0 L395.2 1032.0 L394.2 1032.0 L393.2 1032.0 L392.2 1032.0 L391.2 1032.0 L390.2 1032.0 L389.2 1032.0 L388.2 1032.0 L387.2 1032.0 L386.2 1032.0 L385.2 1032.0 L384.2 1032.0 L383.2 1032.0 L382.2 1032.0 L381.2 1032.0 L380.2 1032.0 L379.2 1032.0 L378.2 1032.0 L377.2 1032.0 L376.2 1032.0 L375.2 1032.0 L374.2 1032.0 L373.2 1032.0 L372.2 1032.0 L371.2 1032.0 L370.2 1032.0 L369.2 1032.0 L368.2 1032.0 L367.2 1032.0 L366.2 1032.0 L365.2 1032.0 L364.2 1032.0 L363.2 1032.0 L362.2 1032.0 L361.2 1032.0 L360.2 1032.0 L359.2 1032.0 L358.2 1032.0 L357.2 1032.0 L356.2 1032.0 L355.2 1032.0 L354.2 1032.0 L353.2 1032.0 L352.2 1032.0 L351.2 1032.0 L350.2 1032.0 L349.2 1032.0 L348.2 1032.0 L347.2 1032.0 L346.2 1032.0 L345.2 1032.0 L344.2 1032.0 L343.2 1032.0 L342.2 1032.0 L341.2 1032.0 L340.2 1032.0 L339.2 1032.0 L338.2 1032.0 L337.2 1032.0 L336.2 1032.0 L335.2 1032.0 L334.2 1032.0 L333.2 1032.0 L332.2 1032.0 L331.2 1032.0 L330.2 1032.0 L329.2 1032.0 L328.2 1032.0 L327.2 1032.0 L326.2 1032.0 L325.2 1032.0 L324.2 1032.0 L323.2 1032.0 L322.2 1032.0 L321.2 1032.0 L320.2 1032.0 L319.2 1032.0 L318.2 1032.0 L317.2 1032.0 L316.2 1032.0 L315.2 1032.0 L314.2 1032.0 L313.2 1032.0 L312.2 1032.0 L311.2 1032.0 L310.2 1032.0 L309.2 1032.0 L308.2 1032.0 L307.2 1032.0 L306.2 1032.0 L305.2 1032.0 L304.2 1032.0 L303.2 1032.0 L302.2 1032.0 L301.2 1032.0 L300.2 1032.0 L299.2 1032.0 L298.2 1032.0 L297.2 1032.0 L296.2 1032.0 L295.2 1032.0 L294.2 1032.0 L293.2 1032.0 L292.2 1032.0 L291.2 1032.0 L290.2 1032.0 L289.2 1032.0 L288.2 1032.0 L287.2 1032.0 L286.2 1032.0 L285.2 1032.0 L284.2 1032.0 L283.2 1032.0 L282.2 1032.0 L281.2 1032.0 L280.2 1032.0 L279.2 1032.0 L278.2 1032.0 L277.2 1032.0 L276.2 1032.0 L275.2 1032.0 L274.2 1032.0 L273.2 1032.0 L272.2 1032.0 L271.2 1032.0 L270.2 1032.0 L269.2 1032.0 L268.2 1032.0 L267.2 1032.0 L266.2 1032.0 L265.2 1032.0 L264.2 1032.0 L263.2 1032.0 Z" fill="#6f8169"/></svg></div>
<svg style="left:0px;top:0px;" width="600" height="1200" viewBox="0 0 600 1200"><circle cx="255.5" cy="1116.8" r="10.5" fill="#5d7189"/><circle cx="489" cy="1116.8" r="10.5" fill="#8f5d68"/></svg>
<div class="t" style="left:280px;top:1106.9px;font-size:22px;font-weight:400;color:#6a6a6a;;letter-spacing:0.245px">Бытовая химия</div>
<div class="a" style="left:1500px;top:158px;width:885px;height:969px;background:#8c8c8c;border-radius:8px"></div>
<div class="a" style="left:1500px;top:238px;width:885px;height:889px;overflow:hidden"><svg style="left:-1500px;top:-238px;" width="2400" height="1200" viewBox="0 0 2400 1200"><rect x="1500" y="238" width="885" height="888" fill="#8d8d8c"/><path d="M2061 262 L2085 258 L2110 275 L2110 283 L2061 283Z" fill="#838a80"/><path d="M2130 260 Q2160 250 2180 262 L2185 283 L2128 283Z" fill="#838a80"/><path d="M2061 519 L2094 522 L2090 556 L2061 552Z" fill="#838a80"/><path d="M2232 525 Q2290 515 2345 530 L2349 600 Q2310 612 2270 600 Q2240 590 2234 560Z" fill="#838a80"/><path d="M2106 650 Q2140 630 2175 640 Q2210 645 2210 665 Q2180 680 2160 700 Q2120 705 2108 690Z" fill="#838a80"/><path d="M2249 694 Q2270 688 2290 695 L2288 719 L2252 718Z" fill="#838a80"/><path d="M2283 755 Q2310 748 2342 760 L2340 806 Q2300 810 2285 795Z" fill="#838a80"/><path d="M2061 753 L2086 755 L2088 850 L2061 850Z" fill="#838a80"/><path d="M2330 760 Q2360 757 2385 765 L2385 850 Q2350 850 2332 830Z" fill="#838a80"/><path d="M2061 820 L2079 822 L2080 864 L2061 862Z" fill="#838a80"/><path d="M2112 870 Q2150 860 2180 885 Q2230 900 2262 940 Q2275 1000 2270 1050 Q2220 1055 2190 1040 Q2160 1000 2140 990 Q2115 950 2110 910Z" fill="#838a80"/><path d="M2294 922 Q2310 918 2325 925 L2322 935 L2295 934Z" fill="#838a80"/><path d="M2072 1075 Q2095 1070 2117 1080 L2115 1126 L2075 1126Z" fill="#838a80"/><path d="M2305 1071 Q2325 1068 2339 1075 L2336 1091 L2307 1090Z" fill="#838a80"/><path d="M2061 935.6 L2083 935.6 L2110 957.8 L2092 975.6 L2112 986.7 L2119 1020 L2139 1042 L2168 1066.7 L2205.6 1084.4 L2250 1108.9 L2270 1117.8 L2294 1097.8 L2328 1031 L2316.7 997.8 L2354 988.9 L2376.7 1008.9 L2365.6 1028.9" fill="none" stroke="#7b8b9d" stroke-width="3" stroke-linejoin="round"/><path d="M2359 631 L2366 646" fill="none" stroke="#7b8b9d" stroke-width="3" stroke-linejoin="round"/><path d="M2350 740 L2385 770" fill="none" stroke="#7b8b9d" stroke-width="2.5" stroke-linejoin="round"/><path d="M2300 240 L2320 250 L2345 240 L2360 252 L2385 238" fill="none" stroke="#7b8b9d" stroke-width="2" stroke-linejoin="round"/><ellipse cx="2083" cy="690" rx="6" ry="12" fill="#7b8b9d"/><ellipse cx="2216" cy="745" rx="5" ry="8" fill="#7b8b9d"/><ellipse cx="2323" cy="1008" rx="11" ry="15" fill="#7b8b9d"/><ellipse cx="2152" cy="978" rx="5" ry="6" fill="#7b8b9d"/><ellipse cx="2267" cy="820" rx="7" ry="13" fill="#7b8b9d"/><path d="M2061 569 L2145 531.6 L2154.5 528 L2225 523 L2290 512 L2385 505" fill="none" stroke="#9d947e" stroke-width="3" stroke-linecap="round" stroke-linejoin="round"/><path d="M2074 516 L2072 640 L2070 770 L2061 800" fill="none" stroke="#9d947e" stroke-width="3" stroke-linecap="round" stroke-linejoin="round"/><path d="M2061 641 L2120 630 L2166.7 622.7" fill="none" stroke="#9d947e" stroke-width="3" stroke-linecap="round" stroke-linejoin="round"/><path d="M2225 524 L2234.7 609.4 L2240 640 L2232 684.7 L2293 687 L2300 678.6 L2320 677.4 L2339 694.5 L2341.7 714" fill="none" stroke="#9d947e" stroke-width="2.5" stroke-linecap="round" stroke-linejoin="round"/><path d="M2290.6 628.8 L2300 677.4" fill="none" stroke="#9d947e" stroke-width="2" stroke-linecap="round" stroke-linejoin="round"/><path d="M2293 645.8 L2324.7 645.8 L2327 630" fill="none" stroke="#9d947e" stroke-width="2" stroke-linecap="round" stroke-linejoin="round"/><path d="M2061 726 L2089 723.6 L2123 722.4 L2137.5 727.3 L2169 720 L2176.4 711.5 M2210.4 711.5 L2234.7 721.2 L2268.8 717.5 L2298 728.5 L2341.7 715 L2385 706.6" fill="none" stroke="#a2866f" stroke-width="4" stroke-linecap="round" stroke-linejoin="round"/><path d="M2166.7 723.6 L2200.7 748 L2195.8 769.8 L2190 800" fill="none" stroke="#9d947e" stroke-width="2" stroke-linecap="round" stroke-linejoin="round"/><path d="M2247 755 L2312.5 741.8 L2356 750 L2385 755" fill="none" stroke="#9d947e" stroke-width="2.5" stroke-linecap="round" stroke-linejoin="round"/><path d="M2244.5 692 L2247 755" fill="none" stroke="#9d947e" stroke-width="2" stroke-linecap="round" stroke-linejoin="round"/><path d="M2061 774.7 L2130 825.7 L2205.6 908.9 L2250 953 L2259 975.6 L2285.6 1000 L2303 1020 L2325.6 1046.7 L2356.7 1071 L2385 1108" fill="none" stroke="#9d947e" stroke-width="4" stroke-linecap="round" stroke-linejoin="round"/><path d="M2061 800 L2116.7 829 L2156.7 850" fill="none" stroke="#9d947e" stroke-width="2.5" stroke-linecap="round" stroke-linejoin="round"/><path d="M2339 762.5 L2327 823.3 L2320 850" fill="none" stroke="#9d947e" stroke-width="2" stroke-linecap="round" stroke-linejoin="round"/><path d="M2156.7 820 L2194.4 864.4 L2205.6 897.8 L2227.8 897.8 L2272 913 L2327.8 922 L2345.6 944.4 L2385 953" fill="none" stroke="#9d947e" stroke-width="3" stroke-linecap="round" stroke-linejoin="round"/><path d="M2205.6 913 L2179 935.6 L2167.8 975.6 L2165.6 1035.6 L2201 1042 L2203 1071 L2232 1066.7 L2234 1020 L2285.6 1000" fill="none" stroke="#9d947e" stroke-width="3" stroke-linecap="round" stroke-linejoin="round"/><path d="M2327.8 922 L2334.4 964.4 L2323 984.4 L2343 1051 L2385 1026.7" fill="none" stroke="#9d947e" stroke-width="2" stroke-linecap="round" stroke-linejoin="round"/><path d="M2272 833 L2385 846.7" fill="none" stroke="#9d947e" stroke-width="2.5" stroke-linecap="round" stroke-linejoin="round"/><path d="M2061 1064.4 L2121 1064.4 L2143 1126.7" fill="none" stroke="#9d947e" stroke-width="2" stroke-linecap="round" stroke-linejoin="round"/><path d="M2063 900 L2110 909 L2085 925" fill="none" stroke="#9d947e" stroke-width="2" stroke-linecap="round" stroke-linejoin="round"/><path d="M2061 249 Q2090 251 2110 249 L2140 244 Q2160 250 2195 258 L2218 265 L2216 283" fill="none" stroke="#9d947e" stroke-width="3" stroke-linecap="round" stroke-linejoin="round"/><path d="M2250 283 L2275 238" fill="none" stroke="#9d947e" stroke-width="3" stroke-linecap="round" stroke-linejoin="round"/><path d="M2300 262 Q2330 266 2350 255 L2375 245" fill="none" stroke="#9d947e" stroke-width="2" stroke-linecap="round" stroke-linejoin="round"/><path d="M2320 283 Q2355 276 2385 268" fill="none" stroke="#9d947e" stroke-width="3" stroke-linecap="round" stroke-linejoin="round"/><path d="M2061 790 L2385 870" fill="none" stroke="#7c7c7c" stroke-width="1.2" stroke-linecap="round" stroke-linejoin="round"/><path d="M2080 600 L2180 575 L2385 560" fill="none" stroke="#7c7c7c" stroke-width="1.2" stroke-linecap="round" stroke-linejoin="round"/></svg></div>
<div class="a" style="left:1500px;top:238px;width:885px;height:889px;overflow:hidden">
<div class="t" style="left:546px;top:-16.0px;font-size:26px;font-weight:400;color:#505050;-webkit-text-stroke:0.6px #505050">Королёв</div>
<div class="t" style="left:690px;top:-1.0px;font-size:26px;font-weight:400;color:#505050;;letter-spacing:0.026px">Загорянский</div>
<div class="t" style="left:545px;top:334.1px;font-size:27px;font-weight:400;color:#505050;-webkit-text-stroke:0.6px #505050">Реутов</div>
<div class="t" style="left:668px;top:367.1px;font-size:27px;font-weight:400;color:#505050;-webkit-text-stroke:0.6px #505050">Железнодорожный</div>
<div class="t" style="left:677.5999999999999px;top:464.8px;font-size:18px;font-weight:400;color:#505050;">СВХ</div>
<div class="t" style="left:578px;top:528.1px;font-size:27px;font-weight:400;color:#505050;-webkit-text-stroke:0.6px #505050;letter-spacing:1.606px">Люберцы</div>
<div class="t" style="left:658px;top:592.8px;font-size:25px;font-weight:400;color:#505050;;letter-spacing:0.266px">Томилино</div>
<div class="t" style="left:503px;top:637.5px;font-size:25px;font-weight:400;color:#505050;">Дзержинский</div>
<div class="t" style="left:730.5px;top:640.8px;font-size:25px;font-weight:400;color:#505050;;letter-spacing:-0.200px">Малаховка</div>
<div class="t" style="left:866.6999999999998px;top:710.1px;font-size:27px;font-weight:400;color:#505050;-webkit-text-stroke:0.6px #505050">Жуковский</div>
<div class="t" style="left:597px;top:757.5px;font-size:25px;font-weight:400;color:#505050;;letter-spacing:0.525px">Лыткарино</div>
</div>
<div class="a" style="left:2068px;top:708px;width:23px;height:22px;background:#a86a52;border-radius:4px"></div>
<div class="t" style="left:2072px;top:710.8px;font-size:18px;font-weight:700;color:#c9b7ae;">₽</div>
<div class="a" style="left:2353px;top:1077px;width:32px;height:20px;background:#6b7fa3;border-radius:4px 0 0 4px"></div>
<div class="t" style="left:2357px;top:1078.6px;font-size:17px;font-weight:400;color:#aab4c6;">M-5</div>
<div class="t" style="left:2232px;top:908px;font-size:18px;color:#555;transform-origin:0 0;transform:rotate(53deg)">Новорязанское ш.</div>
<div class="t" style="left:2180px;top:1052px;font-size:20px;color:#6c7e96;transform-origin:0 0;transform:rotate(30deg)">р. Москва</div>
<svg style="left:2368px;top:1109px;" width="12" height="13" viewBox="0 0 12 13"><path d="M12 0V13H0Z" fill="#555"/></svg>
<div class="a" style="left:1700px;top:283px;width:667px;height:233px;background:#8d8d8d;border-radius:4px"></div>
<div class="t" style="left:2058px;top:308.8px;font-size:24px;font-weight:400;color:#6a6a6a;">Sales</div>
<div class="a" style="left:1720px;top:350px;width:633px;height:14px;background:linear-gradient(90deg,#3d4c72 0%,#4a5a80 50%,#6a7f96 100%);border-radius:3px"></div>
<div class="t" style="left:2055px;top:380.4px;font-size:24px;font-weight:400;color:#555;">2,96M</div>
<div class="t" style="left:2152px;width:200px;text-align:right;top:380.4px;font-size:24px;color:#555">9,22M</div>
<div class="t" style="left:2056px;top:419.7px;font-size:24px;font-weight:400;color:#6a6a6a;">OrderCount</div>
<svg style="left:1700px;top:440px;" width="660" height="30" viewBox="0 0 660 30"><path d="M0 26 L652 7.2 V26.8 H0" fill="none" stroke="#555" stroke-width="2"/></svg>
<div class="t" style="left:2055px;top:476.0px;font-size:24px;font-weight:400;color:#555;">1,29K</div>
<div class="t" style="left:2152px;width:200px;text-align:right;top:476.0px;font-size:24px;color:#555">4,08K</div>
<div class="a" style="left:2221px;top:171px;width:151px;height:50px;background:#8f8f8f;border-radius:12px;box-shadow:0 2px 8px rgba(0,0,0,0.12)"></div>
<svg style="left:2233px;top:182.5px;" width="28" height="28" viewBox="0 0 28 28"><defs><mask id="gm3"><rect x="-5" y="-5" width="38" height="38" fill="#fff"/><circle cx="14.0" cy="14.0" r="7.75" fill="#000"/><rect x="11.80" y="3.05" width="4.40" height="10.95" rx="1.2" fill="#000" transform="rotate(0 14.0 14.0)"/><rect x="11.80" y="3.05" width="4.40" height="10.95" rx="1.2" fill="#000" transform="rotate(60 14.0 14.0)"/><rect x="11.80" y="3.05" width="4.40" height="10.95" rx="1.2" fill="#000" transform="rotate(120 14.0 14.0)"/><rect x="11.80" y="3.05" width="4.40" height="10.95" rx="1.2" fill="#000" transform="rotate(180 14.0 14.0)"/><rect x="11.80" y="3.05" width="4.40" height="10.95" rx="1.2" fill="#000" transform="rotate(240 14.0 14.0)"/><rect x="11.80" y="3.05" width="4.40" height="10.95" rx="1.2" fill="#000" transform="rotate(300 14.0 14.0)"/></mask></defs><g mask="url(#gm3)"><circle cx="14.0" cy="14.0" r="10.25" fill="#000"/><rect x="9.30" y="0.55" width="9.40" height="13.45" rx="2.6" fill="#000" transform="rotate(0 14.0 14.0)"/><rect x="9.30" y="0.55" width="9.40" height="13.45" rx="2.6" fill="#000" transform="rotate(60 14.0 14.0)"/><rect x="9.30" y="0.55" width="9.40" height="13.45" rx="2.6" fill="#000" transform="rotate(120 14.0 14.0)"/><rect x="9.30" y="0.55" width="9.40" height="13.45" rx="2.6" fill="#000" transform="rotate(180 14.0 14.0)"/><rect x="9.30" y="0.55" width="9.40" height="13.45" rx="2.6" fill="#000" transform="rotate(240 14.0 14.0)"/><rect x="9.30" y="0.55" width="9.40" height="13.45" rx="2.6" fill="#000" transform="rotate(300 14.0 14.0)"/></g><circle cx="14.0" cy="14.0" r="3.8" fill="none" stroke="#000" stroke-width="2.5"/></svg>
<svg style="left:2281px;top:180px;" width="32" height="32" viewBox="0 0 32 32"><g fill="none" stroke="#000" stroke-width="2.5"><circle cx="7.2" cy="15.3" r="3.7"/><circle cx="24.3" cy="6.9" r="3.7"/><circle cx="24.3" cy="24" r="3.7"/><path d="M10.9 15.3H15.6M20.6 6.9H18A2.4 2.4 0 0 0 15.6 9.3V21.6A2.4 2.4 0 0 0 18 24H20.6"/></g></svg>
<svg style="left:2330px;top:189px;" width="34" height="14" viewBox="0 0 34 14"><circle cx="5.5" cy="7" r="3.2" fill="#000"/><circle cx="17.5" cy="7" r="3.2" fill="#000"/><circle cx="29.5" cy="7" r="3.2" fill="#000"/></svg>
<div class="a" style="left:925px;top:1250px;width:812px;height:154px;background:#8c8c8c;border:3px solid #2c4586;border-radius:16px"></div>
<svg style="left:1023px;top:1290px;" width="32" height="32" viewBox="0 0 32 32"><g fill="none" stroke="#000" stroke-width="2.6" stroke-linejoin="round"><path d="M5 16H11V25.5H5A2.2 2.2 0 0 1 2.8 23.3V18.2A2.2 2.2 0 0 1 5 16Z"/><path d="M11 25.5V13.2A2.2 2.2 0 0 1 13.2 11H19V25.5Z"/><path d="M19 25.5V8.2A2.2 2.2 0 0 1 21.2 6H25A2.2 2.2 0 0 1 27.2 8.2V23.3A2.2 2.2 0 0 1 25 25.5Z"/></g></svg>
<svg style="left:1217px;top:1290px;" width="32" height="32" viewBox="0 0 32 32"><g fill="none" stroke="#000" stroke-width="2.6" stroke-linecap="round"><path d="M3 10H8M17 10H29M3 21H15M24 21H29"/><circle cx="12.5" cy="10" r="4"/><circle cx="19.5" cy="21" r="4"/></g></svg>
<svg style="left:1411px;top:1290px;" width="32" height="32" viewBox="0 0 32 32"><g fill="none" stroke="#000" stroke-width="2.6" stroke-linecap="round"><path d="M4 7H26M4 14H20M4 21H26M4 28H20"/></g></svg>
<div class="t" style="left:1611px;top:1292.3px;font-size:28px;font-weight:400;color:#000;">H</div>
<div class="t" style="left:1013px;top:1333.7px;font-size:24px;font-weight:400;color:#000;;letter-spacing:-0.365px">Чарт</div>
<div class="t" style="left:1181px;top:1333.7px;font-size:24px;font-weight:400;color:#000;;letter-spacing:-0.195px">Селектор</div>
<div class="t" style="left:1398.5px;top:1333.7px;font-size:24px;font-weight:400;color:#000;;letter-spacing:-0.315px">Текст</div>
<div class="t" style="left:1565.5px;top:1333.7px;font-size:24px;font-weight:400;color:#000;;letter-spacing:-0.010px">Заголовок</div>
<div class="a" style="left:499px;top:144px;width:1562px;height:1152px;background:#fff;border-radius:9px;overflow:hidden"><div class="a" style="left:0;top:0;width:487px;height:1152px;background:#f2f2f2"></div><div class="a" style="left:0;top:101px;width:487px;height:72px;background:#b4c6f5"></div><div class="a" style="left:0;top:934px;width:487px;height:2px;background:#d6d6d6"></div></div>
<div class="t" style="left:543px;top:186.5px;font-size:31px;font-weight:400;color:#000;-webkit-text-stroke:0.8px #000;letter-spacing:0.148px">Селекторы</div>
<div class="t" style="left:543px;top:268.1px;font-size:24px;font-weight:400;color:#000;;letter-spacing:-0.356px">Дата заказа</div>
<div class="a" style="left:543px;top:1015px;width:399px;height:49px;border:2px solid #cdcdcd;border-radius:10px"></div>
<svg style="left:670px;top:1027px;" width="24" height="24" viewBox="0 0 24 24"><path d="M12 1v22M1 12h22" stroke="#000" stroke-width="3" stroke-linecap="round"/></svg>
<div class="t" style="left:711px;top:1026.4px;font-size:24px;font-weight:400;color:#000;;letter-spacing:-0.074px">Добавить</div>
<div class="t" style="left:543px;top:1128.6px;font-size:24px;font-weight:400;color:#000;;letter-spacing:-0.316px">Кнопка «Применить»</div>
<svg style="left:782.5px;top:1126.7px;" width="28" height="28" viewBox="0 0 28 28"><circle cx="14" cy="14" r="11.5" fill="none" stroke="#777" stroke-width="2.4"/><path d="M10.6 11.2c0-2 1.5-3.4 3.4-3.4s3.4 1.3 3.4 3.1c0 1.5-.9 2.2-1.9 2.8-.8.5-1.3.9-1.3 1.9" fill="none" stroke="#777" stroke-width="2.4" stroke-linecap="round"/><circle cx="14.2" cy="19.6" r="1.5" fill="#777"/></svg>
<div class="a" style="left:911px;top:1127px;width:31px;height:30px;border:2px solid #c4c4c4;border-radius:7px"></div>
<div class="t" style="left:543px;top:1200.7px;font-size:24px;font-weight:400;color:#000;;letter-spacing:-0.421px">Кнопка «Сбросить»</div>
<svg style="left:763.5px;top:1198.7px;" width="28" height="28" viewBox="0 0 28 28"><circle cx="14" cy="14" r="11.5" fill="none" stroke="#777" stroke-width="2.4"/><path d="M10.6 11.2c0-2 1.5-3.4 3.4-3.4s3.4 1.3 3.4 3.1c0 1.5-.9 2.2-1.9 2.8-.8.5-1.3.9-1.3 1.9" fill="none" stroke="#777" stroke-width="2.4" stroke-linecap="round"/><circle cx="14.2" cy="19.6" r="1.5" fill="#777"/></svg>
<div class="a" style="left:911px;top:1199px;width:31px;height:30px;border:2px solid #c4c4c4;border-radius:7px"></div>
<div class="t" style="left:1043px;top:187.0px;font-size:31px;font-weight:400;color:#000;-webkit-text-stroke:0.8px #000;letter-spacing:0.339px">Настройки селектора</div>
<svg style="left:1989px;top:188px;" width="28" height="28" viewBox="0 0 28 28"><path d="M4 4L24 24M24 4L4 24" stroke="#000" stroke-width="3.2" stroke-linecap="round"/></svg>
<svg style="left:2036px;top:256px;" width="16" height="8" viewBox="0 0 16 8"><path d="M0 8L8 0L16 8Z" fill="#e3e3e3"/></svg>
<div class="a" style="left:2030px;top:275px;width:28px;height:604px;background:#e3e3e3"></div>
<svg style="left:2036px;top:1109px;" width="16" height="8" viewBox="0 0 16 8"><path d="M0 0L8 8L16 0Z" fill="#e3e3e3"/></svg>
<div class="a" style="left:985px;top:240px;width:1040px;height:892px;overflow:hidden">
<div class="t" style="left:58px;top:39.6px;font-size:24px;font-weight:400;color:#000;;letter-spacing:0.284px">Источник</div>
<div class="a" style="left:367px;top:27px;width:640px;height:50px;border:2px solid #d2d2d2;border-radius:10px;background:#fff"></div>
<div class="t" style="left:384px;top:39.3px;font-size:24px;font-weight:400;color:#000;;letter-spacing:-0.568px">На основе датасета</div>
<svg style="left:967px;top:46px;" width="20" height="12" viewBox="0 0 20 12"><path d="M1.5 1.5L10 10L18.5 1.5" fill="none" stroke="#333" stroke-width="2.6" stroke-linecap="round" stroke-linejoin="round"/></svg>
<div class="t" style="left:58px;top:126.3px;font-size:24px;font-weight:400;color:#000;;letter-spacing:-0.038px">Датасет</div>
<div class="a" style="left:367px;top:124px;width:485px;height:50px;border:2px solid #d2d2d2;border-radius:10px;background:#fff"></div>
<div class="a" style="left:390px;top:133px;width:31px;height:31px;background:#10bf12;border-radius:6px"></div>
<svg style="left:390px;top:133px;" width="31" height="31" viewBox="0 0 31 31"><circle cx="12.3" cy="15.5" r="6" fill="none" stroke="#fff" stroke-width="2.4"/><circle cx="18.7" cy="15.5" r="6" fill="none" stroke="#fff" stroke-width="2.4"/></svg>
<div class="t" style="left:436px;top:136.3px;font-size:24px;font-weight:400;color:#000;;letter-spacing:-0.705px">Sales Dataset</div>
<div class="a" style="left:870px;top:124px;width:137px;height:50px;background:#dadada;border-radius:10px"></div>
<div class="t" style="left:891px;top:136.3px;font-size:24px;font-weight:400;color:#000;;letter-spacing:-0.051px">Открыть</div>
<div class="a" style="left:367px;top:196px;width:210px;height:50px;border:2px solid #d2d2d2;border-radius:10px;background:#fff"></div>
<div class="t" style="left:389px;top:208.7px;font-size:24px;font-weight:400;color:#000;;letter-spacing:-0.411px">Указать ссылку</div>
<div class="t" style="left:58px;top:306.7px;font-size:24px;font-weight:400;color:#000;;letter-spacing:-0.654px">Поле</div>
<div class="a" style="left:367px;top:293px;width:640px;height:51px;border:2px solid #d2d2d2;border-radius:10px;background:#fff"></div>
<svg style="left:384px;top:307px;" width="24" height="24" viewBox="0 0 24 24"><rect x="2" y="4" width="18" height="16" rx="3" fill="none" stroke="#2a9a2e" stroke-width="2.2"/><path d="M2 9.5h18M7 1.5v4M15 1.5v4" stroke="#2a9a2e" stroke-width="2.2" stroke-linecap="round"/></svg>
<div class="t" style="left:419.5999999999999px;top:306.7px;font-size:24px;font-weight:400;color:#000;;letter-spacing:-0.086px">OrderDate</div>
<svg style="left:967px;top:313px;" width="20" height="12" viewBox="0 0 20 12"><path d="M1.5 1.5L10 10L18.5 1.5" fill="none" stroke="#333" stroke-width="2.6" stroke-linecap="round" stroke-linejoin="round"/></svg>
<div class="a" style="left:58px;top:379px;width:949px;height:2px;background:#e2e2e2"></div>
<div class="t" style="left:58px;top:421.9px;font-size:24px;font-weight:400;color:#000;;letter-spacing:-0.264px">Тип селектора</div>
<div class="a" style="left:367px;top:408px;width:640px;height:50px;border:2px solid #d2d2d2;border-radius:10px;background:#fff"></div>
<svg style="left:385px;top:420px;" width="26" height="26" viewBox="0 0 26 26"><rect x="2" y="4" width="21" height="19" rx="3.5" fill="none" stroke="#000" stroke-width="2.4"/><path d="M2 10h21M8 1.5v5M17 1.5v5" stroke="#000" stroke-width="2.4" stroke-linecap="round"/></svg>
<div class="t" style="left:423.79999999999995px;top:421.7px;font-size:24px;font-weight:400;color:#000;;letter-spacing:-0.548px">Календарь</div>
<svg style="left:967px;top:428px;" width="20" height="12" viewBox="0 0 20 12"><path d="M1.5 1.5L10 10L18.5 1.5" fill="none" stroke="#333" stroke-width="2.6" stroke-linecap="round" stroke-linejoin="round"/></svg>
<div class="t" style="left:58px;top:507.7px;font-size:24px;font-weight:400;color:#000;;letter-spacing:0.077px">Заголовок</div>
<div class="a" style="left:367px;top:504px;width:31px;height:31px;background:#4e7fe8;border-radius:7px"></div>
<svg style="left:367px;top:504px;" width="31" height="31" viewBox="0 0 31 31"><path d="M8.5 15.5L13.5 20.5L22.5 11" fill="none" stroke="#fff" stroke-width="3.6" stroke-linecap="round" stroke-linejoin="round"/></svg>
<div class="a" style="left:412px;top:495px;width:595px;height:50px;border:2px solid #d2d2d2;border-radius:10px;background:#fff"></div>
<div class="t" style="left:428.79999999999995px;top:507.7px;font-size:24px;font-weight:400;color:#000;;letter-spacing:-0.297px">Дата заказа</div>
<div class="t" style="left:58px;top:594.7px;font-size:24px;font-weight:400;color:#000;;letter-spacing:-0.281px">Размещение заголовка</div>
<div class="a" style="left:367px;top:581px;width:238px;height:50px;background:#dadada;border-radius:10px"></div>
<div class="a" style="left:372px;top:586px;width:103px;height:40px;background:#fff;border-radius:7px"></div>
<div class="t" style="left:391px;top:593.3px;font-size:24px;font-weight:400;color:#000;;letter-spacing:-1.189px">Слева</div>
<div class="t" style="left:504px;top:593.3px;font-size:24px;font-weight:400;color:#000;;letter-spacing:-0.218px">Сверху</div>
<div class="t" style="left:58px;top:681.1px;font-size:24px;font-weight:400;color:#000;;letter-spacing:0.051px">Внутренний заголовок</div>
<svg style="left:316.5px;top:676px;" width="28" height="28" viewBox="0 0 28 28"><circle cx="14" cy="14" r="11.5" fill="none" stroke="#777" stroke-width="2.4"/><path d="M10.6 11.2c0-2 1.5-3.4 3.4-3.4s3.4 1.3 3.4 3.1c0 1.5-.9 2.2-1.9 2.8-.8.5-1.3.9-1.3 1.9" fill="none" stroke="#777" stroke-width="2.4" stroke-linecap="round"/><circle cx="14.2" cy="19.6" r="1.5" fill="#777"/></svg>
<div class="a" style="left:367px;top:677px;width:31px;height:31px;border:2px solid #c4c4c4;border-radius:7px;background:#fff"></div>
<div class="a" style="left:412px;top:668px;width:595px;height:49px;background:#dadada;border-radius:10px"></div>
<div class="t" style="left:58px;top:767.7px;font-size:24px;font-weight:400;color:#000;;letter-spacing:-0.075px">Подсказка</div>
<div class="a" style="left:367px;top:761px;width:31px;height:31px;border:2px solid #c4c4c4;border-radius:7px;background:#fff"></div>
<div class="a" style="left:58px;top:840px;width:949px;height:2px;background:#e2e2e2"></div>
<div class="t" style="left:58px;top:881.7px;font-size:24px;font-weight:400;color:#000;">Операция</div>
<svg style="left:177px;top:878px;" width="28" height="28" viewBox="0 0 28 28"><circle cx="14" cy="14" r="11.5" fill="none" stroke="#777" stroke-width="2.4"/><path d="M10.6 11.2c0-2 1.5-3.4 3.4-3.4s3.4 1.3 3.4 3.1c0 1.5-.9 2.2-1.9 2.8-.8.5-1.3.9-1.3 1.9" fill="none" stroke="#777" stroke-width="2.4" stroke-linecap="round"/><circle cx="14.2" cy="19.6" r="1.5" fill="#777"/></svg>
<div class="a" style="left:367px;top:870px;width:640px;height:50px;border:2px solid #d2d2d2;border-radius:10px;background:#fff"></div>
<svg style="left:967px;top:888px;" width="20" height="12" viewBox="0 0 20 12"><path d="M1.5 1.5L10 10L18.5 1.5" fill="none" stroke="#333" stroke-width="2.6" stroke-linecap="round" stroke-linejoin="round"/></svg>
</div>
<div class="t" style="left:1600.7px;top:1200.7px;font-size:24px;font-weight:400;color:#000;;letter-spacing:-0.202px">Отменить</div>
<div class="a" style="left:1787px;top:1181px;width:231px;height:65px;background:#4e7ce6;border-radius:14px"></div>
<div class="t" style="left:1845px;top:1200.7px;font-size:24px;font-weight:400;color:#fff;;letter-spacing:-0.338px">Сохранить</div>
</body></html>
